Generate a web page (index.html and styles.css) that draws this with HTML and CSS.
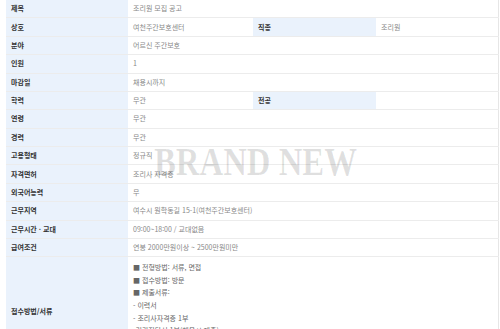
FILE: index.html
```html
<!DOCTYPE html>
<html lang="ko">
<head>
<meta charset="utf-8">
<link rel="stylesheet" href="styles.css">
</head>
<body>
<div class="wrap">
<table class="info">
<colgroup><col class="c1"><col class="c2"><col class="c3"><col class="c4"></colgroup>
<tr><th>제목</th><td colspan="3">조리원 모집 공고</td></tr>
<tr><th>상호</th><td>여천주간보호센터</td><th>직종</th><td>조리원</td></tr>
<tr><th>분야</th><td colspan="3">어르신 주간보호</td></tr>
<tr><th>인원</th><td colspan="3">1</td></tr>
<tr><th>마감일</th><td colspan="3">채용시까지</td></tr>
<tr><th>학력</th><td>무관</td><th>전공</th><td></td></tr>
<tr><th>연령</th><td colspan="3">무관</td></tr>
<tr><th>경력</th><td colspan="3">무관</td></tr>
<tr><th>고용형태</th><td colspan="3">정규직</td></tr>
<tr><th>자격면허</th><td colspan="3">조리사 자격증</td></tr>
<tr><th>외국어능력</th><td colspan="3">무</td></tr>
<tr><th>근무지역</th><td colspan="3">여수시 원학동길 15-1(여천주간보호센터)</td></tr>
<tr><th>근무시간 · 교대</th><td colspan="3">09:00~18:00 / 교대없음</td></tr>
<tr><th>급여조건</th><td colspan="3">연봉 2000만원이상 ~ 2500만원미만</td></tr>
<tr class="tall"><th>접수방법/서류</th><td colspan="3" class="multi">■ 전형방법: 서류, 면접<br>■ 접수방법: 방문<br>■ 제출서류:<br>- 이력서<br>- 조리사자격증 1부<br>-건강진단서 1부(채용시 제출)</td></tr>
</table>
<div class="mark">BRAND NEW</div>
</div>
</body>
</html>
```
FILE: styles.css
```css
html, body { margin: 0; padding: 0; background: #fff; }
body { font-family: "Noto Sans CJK KR", "Noto Sans", sans-serif; overflow: hidden; }
.wrap { position: relative; padding-left: 6px; margin-top: -1px; width: 493px; }
.info { border-collapse: collapse; width: 493px; table-layout: fixed; border-right: 1px solid #e6e6e6; }
.c1 { width: 122px; }
.c2 { width: 125px; }
.c3 { width: 123px; }
.info tr { height: 18.38px; }
.info th, .info td { border-top: 1px solid #ececec; border-bottom: 1px solid #ececec; font-size: 7px; line-height: 9px; padding: 0 5px; text-align: left; vertical-align: middle; white-space: nowrap; }
.info th { background: #eaf2fc; color: #333; font-weight: 700; }
.info td { color: #888; font-weight: 400; }
.info td.multi { line-height: 12.6px; padding-top: 4px; padding-bottom: 28px; vertical-align: top; color: #666; }
.mark { position: absolute; left: 154px; top: 143px; font-family: "Liberation Serif", serif; font-weight: 700; font-size: 39px; line-height: 39px; color: rgba(0,0,0,0.12); white-space: nowrap; transform: scaleX(0.84); transform-origin: 0 0; pointer-events: none; }
```
